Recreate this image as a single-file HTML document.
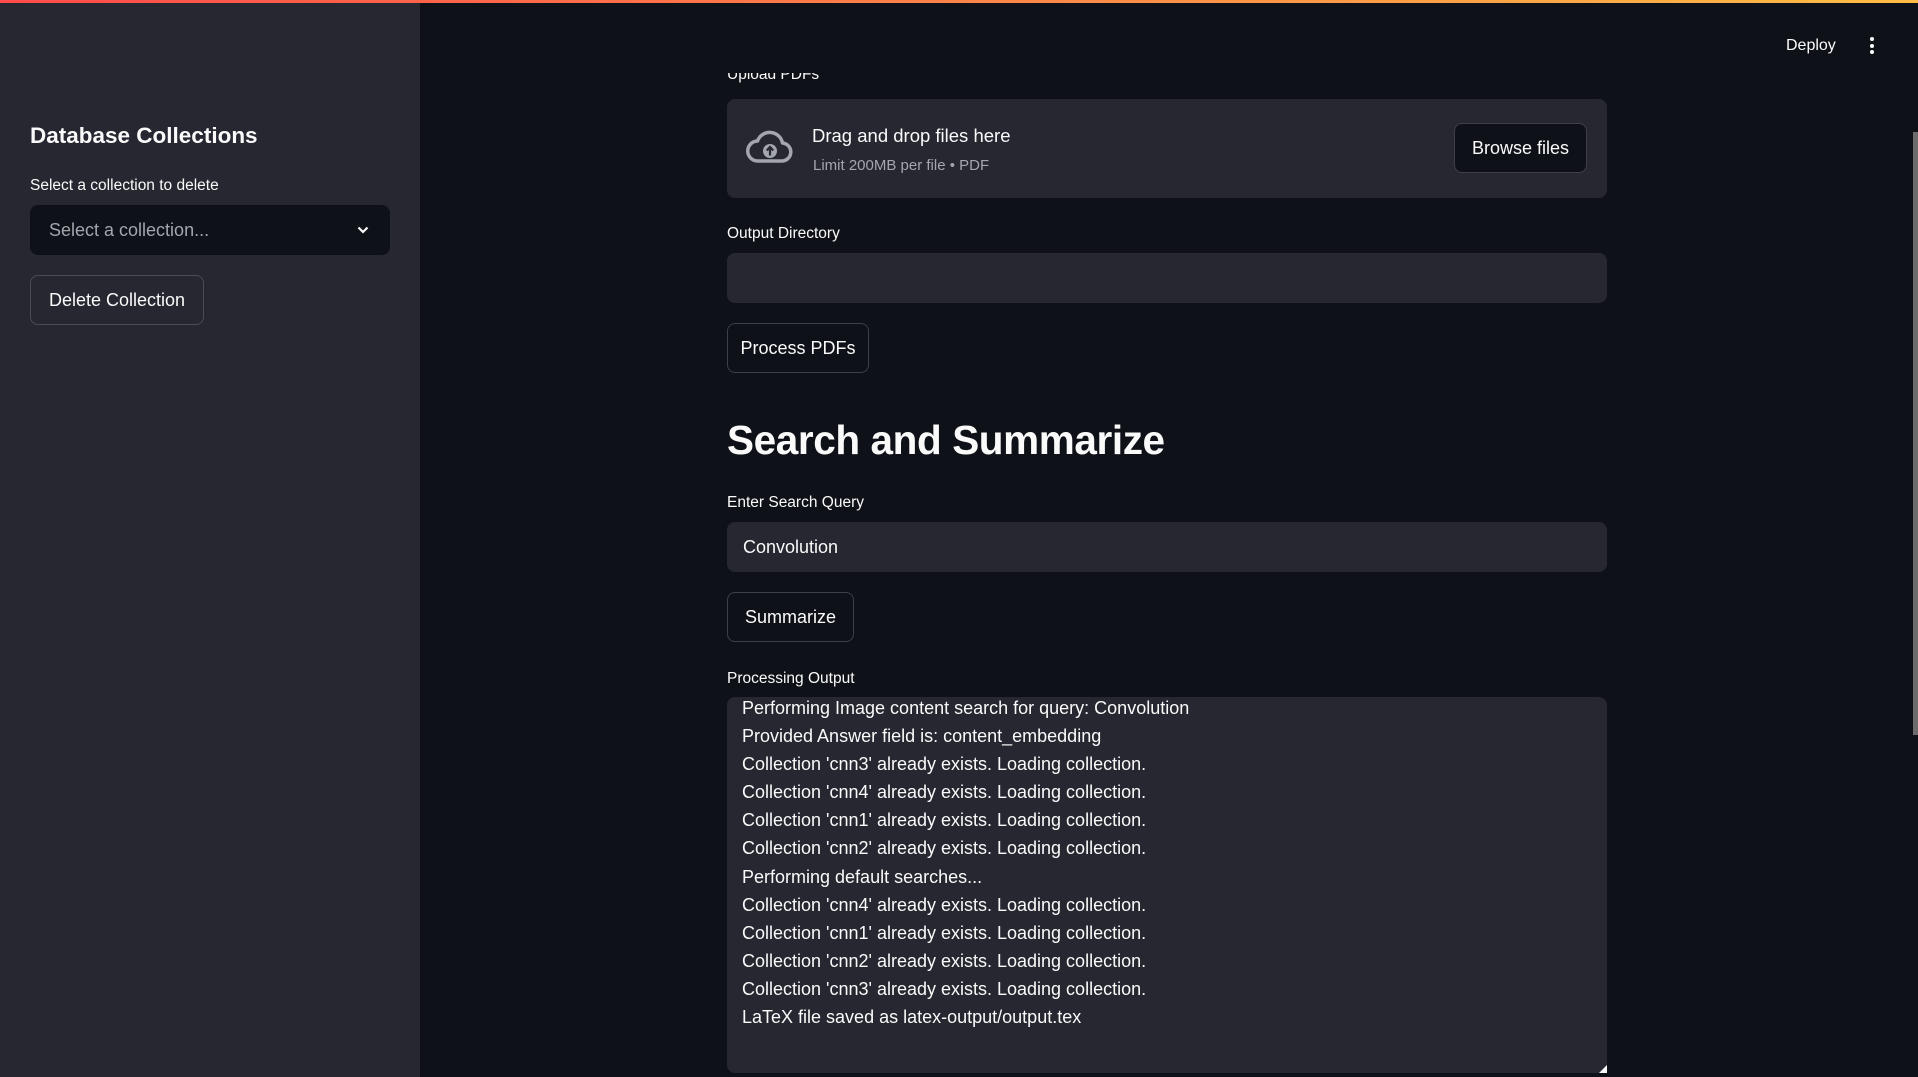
<!DOCTYPE html>
<html><head><meta charset="utf-8"><style>
*{margin:0;padding:0;box-sizing:border-box}
body{width:1918px;height:1077px;overflow:hidden;background:#0e1117;font-family:"Liberation Sans",sans-serif;color:#fafafa;position:relative}
.a{position:absolute}
.topbar{left:0;top:0;width:1918px;height:3px;background:linear-gradient(90deg,#ff4b4b,#ffbd45);z-index:5}
.side{left:0;top:0;width:420px;height:1077px;background:#262730}
.lbl{font-size:15.5px;color:#fafafa;white-space:nowrap}
.btn{border:1px solid #3d3f48;border-radius:8px;background:#0e1117;font-size:18px;display:flex;align-items:center;justify-content:center;color:#fafafa}
.inp{background:#262730;border-radius:8px}
.out{font-size:18px;line-height:28.1px;white-space:nowrap;color:#fafafa}
</style></head><body>
<div class="a topbar"></div>
<div class="a side"></div>
<div class="a" style="left:30px;top:123px;font-size:22.5px;font-weight:bold;white-space:nowrap">Database Collections</div>
<div class="a lbl" style="left:30px;top:177px">Select a collection to delete</div>
<div class="a" style="left:30px;top:205px;width:360px;height:50px;background:#0e1117;border-radius:8px"></div>
<div class="a" style="left:49px;top:220px;font-size:18px;color:#a3a6ad;white-space:nowrap">Select a collection...</div>
<svg class="a" style="left:356px;top:223px" width="14" height="14" viewBox="0 0 14 14"><path d="M2.5 4.5 L7 9 L11.5 4.5" stroke="#fafafa" stroke-width="2.2" fill="none"/></svg>
<div class="a btn" style="left:30px;top:275px;width:174px;height:50px;background:#262730;border-color:#4a4c55">Delete Collection</div>

<div class="a lbl" style="left:727px;top:66px">Upload PDFs</div>
<div class="a" style="left:420px;top:0;width:1490px;height:73px;background:#0e1117;z-index:3"></div>
<div class="a" style="left:1786px;top:37px;font-size:16px;z-index:4">Deploy</div>
<div class="a" style="left:1870px;top:37px;z-index:4">
<div style="width:4px;height:4px;border-radius:2px;background:#fafafa;margin-bottom:2.5px"></div>
<div style="width:4px;height:4px;border-radius:2px;background:#fafafa;margin-bottom:2.5px"></div>
<div style="width:4px;height:4px;border-radius:2px;background:#fafafa"></div></div>

<div class="a inp" style="left:727px;top:99px;width:880px;height:99px"></div>
<svg class="a" style="left:745px;top:128px" width="50" height="40" viewBox="0 0 50 40"><path d="M13 33 H36 A9 9 0 0 0 37.5 15 A13 13 0 0 0 12.5 13 A10 10 0 0 0 13 33 Z" stroke="#a3a6ad" stroke-width="3.5" fill="none" stroke-linejoin="round"/><circle cx="25" cy="23" r="7" fill="#a3a6ad"/><path d="M25 27.5 V20 M21.8 22.5 L25 19 L28.2 22.5" stroke="#262730" stroke-width="2.2" fill="none"/></svg>
<div class="a" style="left:812px;top:125px;font-size:18.5px;white-space:nowrap">Drag and drop files here</div>
<div class="a" style="left:813px;top:157px;font-size:15px;color:#a3a6ad;white-space:nowrap">Limit 200MB per file • PDF</div>
<div class="a btn" style="left:1454px;top:123px;width:133px;height:50px">Browse files</div>

<div class="a lbl" style="left:727px;top:225px">Output Directory</div>
<div class="a inp" style="left:727px;top:253px;width:880px;height:50px"></div>
<div class="a btn" style="left:727px;top:323px;width:142px;height:50px">Process PDFs</div>

<div class="a" style="left:727px;top:417px;font-size:40.5px;font-weight:bold;letter-spacing:-0.4px;white-space:nowrap">Search and Summarize</div>

<div class="a lbl" style="left:727px;top:494px">Enter Search Query</div>
<div class="a inp" style="left:727px;top:522px;width:880px;height:50px"></div>
<div class="a" style="left:743px;top:537px;font-size:18px;white-space:nowrap">Convolution</div>
<div class="a btn" style="left:727px;top:592px;width:127px;height:50px">Summarize</div>

<div class="a lbl" style="left:727px;top:670px">Processing Output</div>
<div class="a inp" style="left:727px;top:697px;width:880px;height:376px;overflow:hidden">
<div class="out" style="position:absolute;left:15px;top:-3px">
Performing Image content search for query: Convolution<br>
Provided Answer field is: content_embedding<br>
Collection 'cnn3' already exists. Loading collection.<br>
Collection 'cnn4' already exists. Loading collection.<br>
Collection 'cnn1' already exists. Loading collection.<br>
Collection 'cnn2' already exists. Loading collection.<br>
Performing default searches...<br>
Collection 'cnn4' already exists. Loading collection.<br>
Collection 'cnn1' already exists. Loading collection.<br>
Collection 'cnn2' already exists. Loading collection.<br>
Collection 'cnn3' already exists. Loading collection.<br>
LaTeX file saved as latex-output/output.tex
</div></div>
<svg class="a" style="left:1599px;top:1065px" width="8" height="8" viewBox="0 0 8 8"><path d="M8 0 V8 H0 Z" fill="#fafafa"/></svg>

<div class="a" style="left:1913px;top:132px;width:5px;height:603px;background:#6b6b6b"></div>
</body></html>
